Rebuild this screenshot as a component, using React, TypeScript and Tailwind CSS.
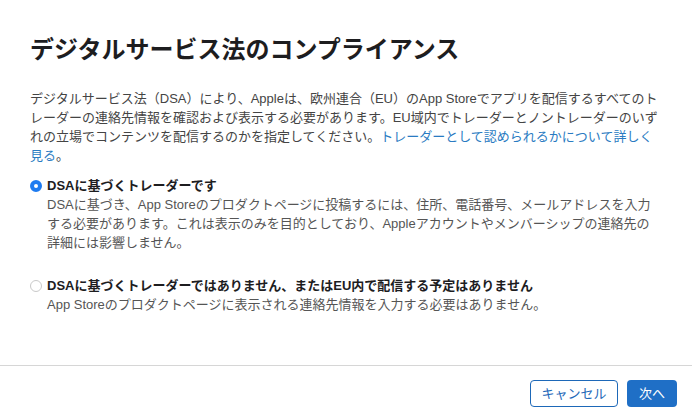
import React, { useState } from 'react';

const font = "font-['Liberation_Sans','Noto_Sans_CJK_JP',sans-serif]";

interface OptionProps {
  checked: boolean;
  label: string;
  lines: string[];
  onSelect: () => void;
  className?: string;
}

const Option: React.FC<OptionProps> = ({ checked, label, lines, onSelect, className }) => (
  <div className={className}>
    <button onClick={onSelect} className="flex items-center gap-[5px] text-left">
      {checked ? (
        <span className="w-3 h-3 rounded-full border-[4px] border-[#1e7bf0] bg-white shrink-0" />
      ) : (
        <span className="w-3 h-3 rounded-full border border-[#c9c9c9] bg-white shrink-0" />
      )}
      <span className="text-[13px] leading-[19px] font-bold text-[#1d1d1f]">{label}</span>
    </button>
    <p className="pl-[17px] text-[13px] leading-[19px] text-[#555]">
      {lines.map((l, i) => (
        <React.Fragment key={i}>
          {l}
          {i < lines.length - 1 && <br />}
        </React.Fragment>
      ))}
    </p>
  </div>
);

export default function App() {
  const [trader, setTrader] = useState(true);

  return (
    <div className={`${font} w-[692px] h-[420px] bg-white flex flex-col`}>
      <div className="pl-[30px] pt-[35px] flex-1">
        <h1 className="text-[24px] leading-[30px] font-bold text-[#1d1d1f]">
          デジタルサービス法のコンプライアンス
        </h1>

        <p className="mt-[24px] text-[13px] leading-[19px] text-[#444] whitespace-nowrap">
          デジタルサービス法（DSA）により、Appleは、欧州連合（EU）のApp Storeでアプリを配信するすべてのト
          <br />
          レーダーの連絡先情報を確認および表示する必要があります。EU域内でトレーダーとノントレーダーのいず
          <br />
          れの立場でコンテンツを配信するのかを指定してください。
          <a href="#" className="text-[#2a7bc2]">トレーダーとして認められるかについて詳しく</a>
          <br />
          <a href="#" className="text-[#2a7bc2]">見る</a>。
        </p>

        <Option
          className="mt-[11px] whitespace-nowrap"
          checked={trader}
          onSelect={() => setTrader(true)}
          label="DSAに基づくトレーダーです"
          lines={[
            'DSAに基づき、App Storeのプロダクトページに投稿するには、住所、電話番号、メールアドレスを入力',
            'する必要があります。これは表示のみを目的としており、Appleアカウントやメンバーシップの連絡先の',
            '詳細には影響しません。',
          ]}
        />

        <Option
          className="mt-[24px] whitespace-nowrap"
          checked={!trader}
          onSelect={() => setTrader(false)}
          label="DSAに基づくトレーダーではありません、またはEU内で配信する予定はありません"
          lines={['App Storeのプロダクトページに表示される連絡先情報を入力する必要はありません。']}
        />
      </div>

      <div className="border-t border-[#d6d6d6] h-[55px] flex items-start justify-end gap-[9px] pr-[15px] pt-[14px]">
        <button className="h-[27px] w-[88px] rounded-[4px] border border-[#1d68b8] text-[13px] text-[#1d68b8] bg-white">
          キャンセル
        </button>
        <button className="h-[27px] w-[50px] rounded-[4px] bg-[#1f6fc6] text-[13px] text-white">
          次へ
        </button>
      </div>
    </div>
  );
}
